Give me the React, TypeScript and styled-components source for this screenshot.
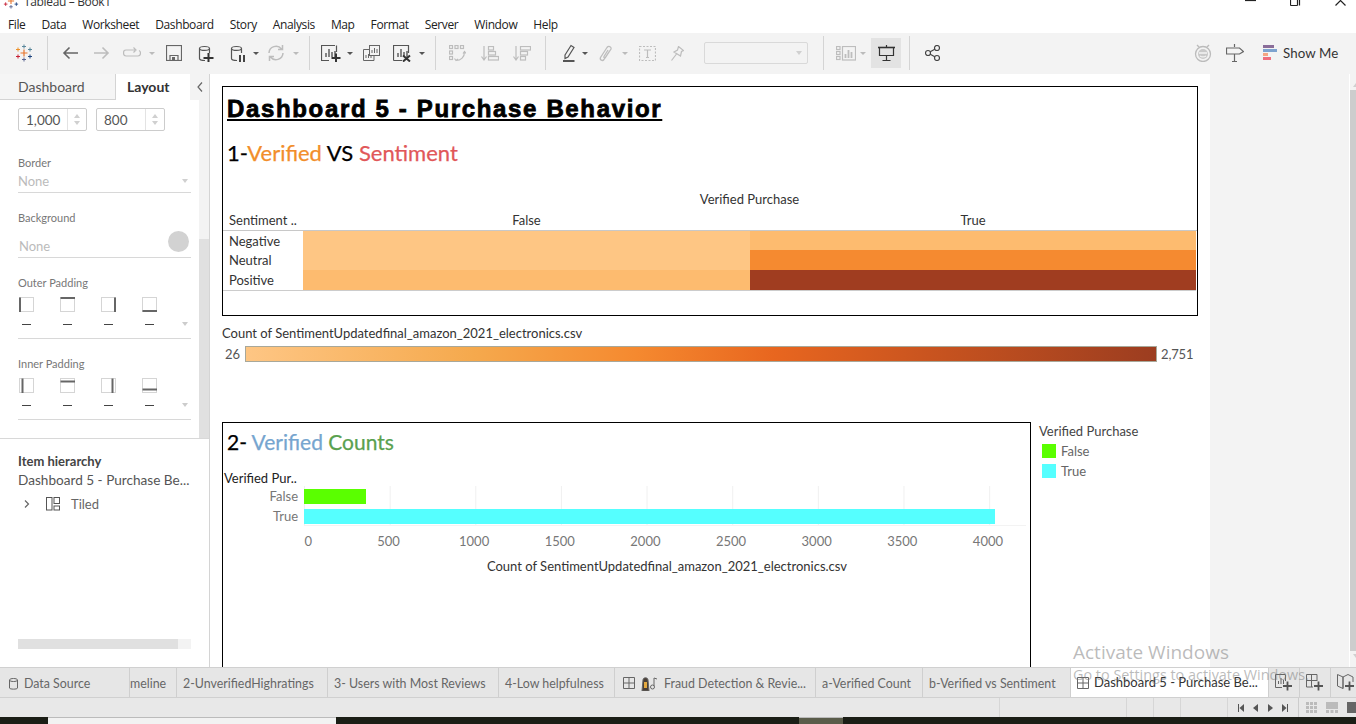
import React from "react";
import styled, { createGlobalStyle } from "styled-components";

const Global = createGlobalStyle`
  html, body { margin: 0; padding: 0; background: #fff; overflow: hidden; }
  * { box-sizing: border-box; }
`;
const TB = `"Lato", "Noto Sans", sans-serif`;
const UI = `"Open Sans", "Noto Sans", sans-serif`;

const Page = styled.div`
  width: 1356px; height: 724px; display: flex; flex-direction: column; position: relative; overflow: hidden;
  font-family: ${TB}; color: #333;
`;
const TitleBar = styled.div`
  height: 14px; flex: none; overflow: hidden; display: flex; align-items: flex-start; padding-left: 3px;
`;
const TitleLogo = styled.div`
  margin-top: -7px;
`;
const TitleText = styled.span`
  font: 12px ${UI}; color: #333; margin: -6px 0 0 5px; line-height: 16px; letter-spacing: -0.35px;
`;
const WinControls = styled.div`
  margin-left: auto; display: flex; gap: 34px; padding-right: 10px;
`;
const MenuBar = styled.div`
  height: 19px; flex: none; display: flex; gap: 16px; padding: 1px 0 0 8px; align-items: center;
  font: 12px ${UI}; color: #222; letter-spacing: -0.38px;
`;
const Toolbar = styled.div`
  height: 41px; flex: none; background: #f3f3f3; display: flex; align-items: center; padding-bottom: 1px;
`;
const Tool = styled.div<{ $ml?: number }>`
  display: flex; align-items: center; justify-content: center; flex: none; margin-left: ${p => p.$ml || 0}px;
`;
const Sep = styled.div<{ $ml: number }>`
  width: 1px; height: 34px; background: #d4d4d4; flex: none; margin-left: ${p => p.$ml}px;
`;
const Caret = styled.div<{ $ml: number; $light?: boolean }>`
  width: 0; height: 0; flex: none; margin-left: ${p => p.$ml}px;
  border-left: 3px solid transparent; border-right: 3px solid transparent;
  border-top: 3px solid ${p => (p.$light ? "#bbb" : "#555")}; 
`;
const Combo = styled.div`
  width: 104px; height: 22px; margin-left: 20px; flex: none; border: 1px solid #d9d9d9; border-radius: 2px;
  display: flex; align-items: center; justify-content: flex-end; padding-right: 5px;
`;
const ActiveTool = styled.div`
  width: 30px; height: 30px; margin-left: 5px; background: #e3e3e3; flex: none; display: flex; align-items: center; justify-content: center;
`;
const ShowMe = styled.div`
  display: flex; align-items: center; gap: 6px; margin-left: 19px; font: 13.3px ${TB}; color: #333; letter-spacing: 0.1px;
`;
const Main = styled.div`
  height: 593px; flex: none; display: flex; overflow: hidden;
`;
const Side = styled.aside`
  width: 210px; flex: none; border-right: 1px solid #d4d4d4; display: flex; flex-direction: column; background: #fff;
`;
const SideTabs = styled.div`
  height: 26px; flex: none; display: flex; background: #f3f3f3;
`;
const SideTab = styled.div<{ $active?: boolean; $w: number }>`
  width: ${p => p.$w}px; display: flex; align-items: center; font-size: 14px;
  padding-left: ${p => (p.$active ? 11 : 18)}px; padding-bottom: 1px;
  font-weight: ${p => (p.$active ? 700 : 400)}; color: ${p => (p.$active ? "#333" : "#555")};
  background: ${p => (p.$active ? "#fff" : "#f5f5f5")};
  border-right: ${p => (p.$active ? "none" : "1px solid #d4d4d4")};
  border-bottom: ${p => (p.$active ? "none" : "1px solid #d4d4d4")};
`;
const SideChevron = styled.div`
  flex: 1; display: flex; align-items: center; justify-content: center;
`;
const SideTop = styled.div`
  height: 339px; flex: none; display: flex; border-bottom: 1px solid #d8d8d8; overflow: hidden;
`;
const SideForm = styled.div`
  width: 199px; flex: none; padding: 8px 8px 0 18px; overflow: hidden; background: #fff;
`;
const VScroll = styled.div`
  width: 10px; flex: none; display: flex; flex-direction: column; background: #f3f3f3;
`;
const VThumb = styled.div`
  margin-top: 139px; flex: 1; background: #e0e0e0;
`;
const SizeRow = styled.div`
  display: flex; gap: 9px;
`;
const Spin = styled.div<{ $w: number }>`
  width: ${p => p.$w}px; height: 23px; border: 1px solid #ccc; border-radius: 2px; display: flex; align-items: center;
  justify-content: space-between; padding-left: 7px; font-size: 13.5px; color: #555;
`;
const SpinBtns = styled.div`
  width: 19px; height: 100%; border-left: 1px solid #e3e3e3; display: flex; flex-direction: column; align-items: center; justify-content: space-around; padding: 3px 0;
`;
const Arrow = styled.div<{ $up?: boolean }>`
  width: 0; height: 0; border-left: 3.5px solid transparent; border-right: 3.5px solid transparent;
  ${p => (p.$up ? "border-bottom: 4px solid #d0d0d0;" : "border-top: 4px solid #d0d0d0;")}
`;
const FieldLabel = styled.div<{ $mt: number }>`
  margin-top: ${p => p.$mt}px; font-size: 11px; line-height: 14px; color: #777;
`;
const FieldValue = styled.div<{ $h: number; $pl?: number; $pt?: number }>`
  height: ${p => p.$h}px; border-bottom: 1px solid #d8d8d8; display: flex; align-items: center; justify-content: space-between;
  font-size: 13px; color: #bbb; padding: ${p => p.$pt || 0}px 3px 0 ${p => p.$pl || 0}px; 
`;
const Swatch = styled.div`
  width: 21px; height: 21px; border-radius: 50%; background: #d2d2d2; margin: -10px -1px 0 0;
`;
const PadBlock = styled.div`
  height: 49px; border-bottom: 1px solid #d8d8d8; position: relative; padding-top: 7px;
`;
const PadIcons = styled.div`
  display: flex; gap: 25px; padding-left: 1px;
`;
const PadDashes = styled.div`
  display: flex; gap: 32px; padding: 11px 0 0 4px; 
`;
const Dash = styled.div`
  width: 9px; height: 1px; background: #444; 
`;
const PadCaret = styled.div`
  position: absolute; right: 3px; top: 32px; width: 0; height: 0;
  border-left: 3.5px solid transparent; border-right: 3.5px solid transparent; border-top: 4px solid #ccc;
`;
const Hier = styled.div`
  flex: 1; padding: 14px 18px 0; display: flex; flex-direction: column; min-height: 0;
`;
const HierTitle = styled.div`
  font-size: 13px; font-weight: 700; color: #444; line-height: 17px;
`;
const HierName = styled.div`
  font-size: 13.6px; color: #555; line-height: 19px; margin-top: 1px; white-space: nowrap;
`;
const HierItem = styled.div`
  display: flex; align-items: center; margin-top: 5px; padding-left: 6px; font-size: 13px; color: #666; height: 18px;
`;
const HierIcon = styled.div`
  margin-left: 16px; margin-right: 11px;
`;
const HScroll = styled.div`
  margin-top: auto; margin-bottom: 18px; height: 10px; background: #f3f3f3; flex: none;
`;
const HThumb = styled.div`
  width: 160px; height: 100%; background: #e0e0e0;
`;
const Canvas = styled.div`
  width: 1000px; flex: none; background: #fff; padding: 12px 12px 0; overflow: hidden;
`;
const Gutter = styled.div`
  flex: 1; background: #f3f3f3; display: flex; justify-content: flex-end;
`;
const PageScroll = styled.div`
  width: 7px; background: #f3f3f3; border-left: 1px solid #fff; display: flex; flex-direction: column;
`;
const ScrollArrow = styled.div<{ $up?: boolean }>`
  height: 16px; flex: none; display: flex; align-items: ${p => (p.$up ? "flex-end" : "flex-start")}; padding-left: 3px;
  padding-bottom: ${p => (p.$up ? 3 : 0)}px; padding-top: ${p => (p.$up ? 0 : 3)}px;
`;
const ScrollThumb = styled.div`
  flex: 1; background: #cdcdcd;
`;
const Frame = styled.section`
  border: 1px solid #000; background: #fff;
`;
const Box1 = styled(Frame)`
  width: 976px; height: 230px;
`;
const BigTitle = styled.h1`
  margin: 7px 0 0 4px; font: 900 24px/30px "Liberation Sans", sans-serif; color: #000; text-decoration: underline;
  text-decoration-thickness: 2px; text-underline-offset: 2px; letter-spacing: 1.65px; -webkit-text-stroke: 0.8px #000;
`;
const Heading = styled.h2<{ $mt: number; $size: number }>`
  margin: ${p => p.$mt}px 0 0 4px; font: 400 ${p => p.$size}px/26px ${TB}; color: #000; -webkit-text-stroke: 0.25px currentColor;
`;
const Tint = styled.span<{ $c: string }>`
  color: ${p => p.$c};
`;
const ColTitle = styled.div`
  margin-top: 25px; margin-left: 80px; width: 893px; text-align: center; font-size: 13px; line-height: 16px; color: #333;
`;
const HeatHead = styled.div`
  display: grid; grid-template-columns: 80px 447px 446px; height: 24px; align-items: center; font-size: 13px; color: #333; padding-top: 3px;
  border-bottom: 1px solid #c8c8c8;
`;
const HeadCell = styled.div<{ $c?: boolean }>`
  text-align: ${p => (p.$c ? "center" : "left")}; padding-left: ${p => (p.$c ? 0 : 6)}px; white-space: nowrap;
`;
const HeatGrid = styled.div`
  display: grid; grid-template-columns: 80px 447px 446px; grid-template-rows: 19px 20px 20px; width: 973px; border-bottom: 1px solid #ccc;
`;
const RowHead = styled.div`
  padding-left: 6px; font-size: 13px; line-height: 21px; color: #333;
`;
const HeatCell = styled.div<{ $c: string }>`
  background: ${p => p.$c};
`;
const LegendTitle = styled.div`
  margin-top: 9px; font-size: 13px; line-height: 16px; color: #333; 
`;
const GradRow = styled.div`
  display: flex; align-items: center; height: 16px; margin-top: 5px; font-size: 13px; color: #555;
`;
const GradMin = styled.div`
  width: 23px; padding-right: 5px; text-align: right; 
`;
const GradBar = styled.div`
  width: 912px; height: 16px; flex: none; border: 1px solid #a8a89a; 
  background: linear-gradient(to right, #fec684 0%, #f5a94d 25%, #f5892f 43%, #e8661f 58%, #c9541f 75%, #9c3d20 100%);
`;
const GradMax = styled.div`
  margin-left: 4px; letter-spacing: -0.15px;
`;
const Lower = styled.div`
  display: flex; margin-top: 60px; gap: 8px;
`;
const Box2 = styled(Frame)`
  width: 809px; height: 300px; flex: none;
`;
const ChartHeader = styled.div`
  margin: 15px 0 0 1px; font-size: 13px; line-height: 16px; color: #222;
`;
const ChartBody = styled.div`
  display: flex;
`;
const AxisLabels = styled.div`
  width: 75px; flex: none; text-align: right; padding: 3px 0 0; font-size: 13px; color: #777;
  display: flex; flex-direction: column; gap: 5px; line-height: 15px;
`;
const Plot = styled.div`
  margin-left: 6px; width: 722px; height: 40px; padding-top: 3px; display: flex; flex-direction: column; gap: 5px;
  background-image: linear-gradient(to right, #f0f0f0 1px, transparent 1px);
  background-size: 85.65px 100%; background-position: 0 0; border-bottom: 1px solid #f3f3f3;
`;
const Bar = styled.div<{ $c: string }>`
  height: 15px; background: ${p => p.$c};
`;
const Ticks = styled.div`
  display: flex; margin: 7px 0 0 37px; font-size: 13px; line-height: 16px; color: #777;
`;
const TickCell = styled.div<{ $first?: boolean }>`
  width: 85.65px; flex: none; text-align: center; padding-left: ${p => (p.$first ? 11 : 0)}px;
`;
const XTitle = styled.div`
  margin-top: 9px; width: 888px; text-align: center; font-size: 13px; line-height: 16px; color: #333;
`;
const SideLegend = styled.div`
  padding-top: 1px;
`;
const SideLegendTitle = styled.div`
  font-size: 13px; line-height: 16px; color: #444;
`;
const LegendRow = styled.div`
  display: flex; align-items: center; gap: 5px; margin: 3px 0 0 3px; height: 17px; font-size: 13px; color: #666;
`;
const LegendSwatch = styled.div<{ $c: string }>`
  width: 14px; height: 14px; background: ${p => p.$c};
`;
const TabBar = styled.div`
  height: 31px; flex: none; background: #e6e6e6; border-top: 1px solid #d0d0d0; border-bottom: 1px solid #d0d0d0; display: flex;
`;
const SheetTab = styled.div<{ $w: number; $active?: boolean; $left?: number; $gap?: number }>`
  width: ${p => p.$w}px; flex: none; display: flex; align-items: center; gap: ${p => p.$gap ?? 5}px;
  padding: 1px 0 0 ${p => p.$left ?? 6}px; font-size: 12.4px; color: ${p => (p.$active ? "#333" : "#666")};
  background: ${p => (p.$active ? "#fff" : "transparent")}; border-right: 1px solid #cfcfcf; white-space: nowrap; overflow: hidden;
`;
const ActiveLabel = styled.span`
  font-size: 13px; margin-top: -3px;
`;
const AddTab = styled.div`
  width: 31px; flex: none; display: flex; align-items: center; justify-content: center; border-right: 1px solid #cfcfcf;
`;
const StatusBar = styled.div`
  height: 19px; flex: none; background: #e8e8e8; display: flex; align-items: stretch;
`;
const StatusCell = styled.div<{ $w: number }>`
  width: ${p => p.$w}px; flex: none; border-right: 1px solid #d6d6d6;
`;
const StatusNav = styled.div`
  width: 71px; flex: none; display: flex; align-items: center; justify-content: space-around; padding: 0 5px; border-right: 1px solid #ccc;
`;
const ViewBtns = styled.div`
  flex: 1; display: flex; align-items: center; gap: 9px; padding-left: 7px; overflow: hidden;
`;
const Taskbar = styled.div`
  height: 7px; flex: none; display: flex; background: #1b1e16;
`;
const TaskGap = styled.div<{ $w: number }>`
  width: ${p => p.$w}px; flex: none;
`;
const TaskItem = styled.div<{ $w: number; $c: string }>`
  width: ${p => p.$w}px; flex: none; background: ${p => p.$c}; border-top: 1px solid #bbb;
`;
const Watermark = styled.div`
  position: absolute; left: 1073px; top: 641px; color: rgba(120,120,120,0.5); font: 19px/22px ${UI}; pointer-events: none;
`;
const WatermarkSub = styled.div`
  font-size: 14.4px; line-height: 20px; margin-top: 2px; white-space: nowrap; 
`;

const S = ({ w, h, children, c = "#555", sw = 1.2 }: { w: number; h: number; children: React.ReactNode; c?: string; sw?: number }) => (
  <svg width={w} height={h} viewBox={`0 0 ${w} ${h}`} fill="none" stroke={c} strokeWidth={sw} style={{ display: "block", flex: "none" }}>
    {children}
  </svg>
);

const Cross = ({ x, y, r, c, sw = 1.2 }: { x: number; y: number; r: number; c: string; sw?: number }) => (
  <path d={`M${x - r} ${y}H${x + r}M${x} ${y - r}V${y + r}`} stroke={c} strokeWidth={sw} />
);

const TableauLogo = ({ size = 18 }: { size?: number }) => (
  <svg width={size} height={size} viewBox="0 0 18 18" fill="none" style={{ display: "block" }}>
    <Cross x={9} y={9} r={3.5} c="#e8762d" sw={1.2} />
    <Cross x={9} y={2.5} r={2} c="#5b879b" sw={1} />
    <Cross x={9} y={15.5} r={2} c="#5b6591" sw={1} />
    <Cross x={3} y={5.5} r={2} c="#eb912b" sw={1} />
    <Cross x={15} y={5.5} r={2} c="#59879b" sw={1} />
    <Cross x={3} y={12.5} r={2} c="#c72035" sw={1} />
    <Cross x={15} y={12.5} r={2} c="#1f447e" sw={1} />
  </svg>
);

const Db = ({ c = "#555" }: { c?: string }) => (
  <path d="M1.5 3.5C1.5 .8 11.5 .8 11.5 3.5M1.5 3.5C1.5 6 11.5 6 11.5 3.5V8M1.5 3.5V13.5C1.5 15 4 15.5 7 15.5" stroke={c} />
);

const Bars = ({ c = "#555" }: { c?: string }) => (
  <path d="M5 12V8M8 12V4M11 12V7M14 12V6" stroke={c} strokeWidth={1.4} />
);

const PadIcon = ({ side, inner }: { side: "l" | "t" | "r" | "b"; inner?: boolean }) => {
  const o = inner ? 3.5 : 1;
  const line =
    side === "l" ? `M${o} 0.5V15` : side === "r" ? `M${15 - o} 0.5V15` : side === "t" ? `M0.5 ${o}H15` : `M0.5 ${15 - o}H15`;
  return (
    <S w={16} h={16}>
      <rect x={0.5} y={0.5} width={14} height={14} stroke="#aaa" strokeDasharray="1 1" strokeWidth={1} />
      <path d={line} stroke="#666" strokeWidth={2} />
    </S>
  );
};

const PadSection = ({ inner }: { inner?: boolean }) => (
  <PadBlock>
    <PadIcons>
      <PadIcon side="l" inner={inner} />
      <PadIcon side="t" inner={inner} />
      <PadIcon side="r" inner={inner} />
      <PadIcon side="b" inner={inner} />
    </PadIcons>
    <PadDashes>
      <Dash /><Dash /><Dash /><Dash />
    </PadDashes>
    <PadCaret />
  </PadBlock>
);

const G = "#bdbdbd";

const ticks = [0, 500, 1000, 1500, 2000, 2500, 3000, 3500, 4000];
const MAX_PX = 85.65 / 500;

export default function App() {
  return (
    <Page>
      <Global />
      <TitleBar>
        <TitleLogo><TableauLogo size={16} /></TitleLogo>
        <TitleText>Tableau – Book1</TitleText>
        <WinControls>
          <S w={11} h={6}><path d="M0 .5H11" stroke="#222" /></S>
          <S w={11} h={6}><path d="M.5 5.5V0M9.5 5.5V0M.5 5.5H7.5M7.5 5.5V0" stroke="#222" /></S>
          <S w={11} h={6}><path d="M.5 5.5L5.5 .5L10.5 5.5" stroke="#222" /></S>
        </WinControls>
      </TitleBar>
      <MenuBar>
        {["File", "Data", "Worksheet", "Dashboard", "Story", "Analysis", "Map", "Format", "Server", "Window", "Help"].map(m => (
          <span key={m}>{m}</span>
        ))}
      </MenuBar>
      <Toolbar>
        <Tool $ml={15}><TableauLogo /></Tool>
        <Sep $ml={14} />
        <Tool $ml={14}><S w={16} h={14} c="#666" sw={1.6}><path d="M16 7H2M7.5 1.5L2 7L7.5 12.5" /></S></Tool>
        <Tool $ml={16}><S w={16} h={14} c={G} sw={1.6}><path d="M0 7H14M8.5 1.5L14 7L8.5 12.5" /></S></Tool>
        <Tool $ml={13}><S w={18} h={12} c={G}><path d="M12 3H3C1 3 .5 4.5 .5 6S1 9 3 9H15C17 9 17.5 7.5 17.5 6S17 4 16 3.5M10.5 .5L13 3L10.5 5.5" /></S></Tool>
        <Caret $ml={8} $light />
        <Tool $ml={11}><S w={16} h={16} c="#666"><rect x={.5} y={.5} width={15} height={15} /><path d="M4 15.5V10.5H12V15.5" /><rect x={6} y={12} width={3} height={3.5} fill="#666" stroke="none" /></S></Tool>
        <Tool $ml={16}><S w={16} h={17}><Db /><Cross x={10.5} y={13} r={5} c="#333" sw={2} /></S></Tool>
        <Tool $ml={16}><S w={16} h={17}><Db /><path d="M10 10V17M14 10V17" stroke="#444" strokeWidth={2} /></S></Tool>
        <Caret $ml={7} />
        <Tool $ml={8}><S w={18} h={16} c={G} sw={1.5}><path d="M2 8A7 7 0 0 1 14.5 4M16 8A7 7 0 0 1 3.5 12M11 4.5H15.5V0M7 11.5H2.5V16" /></S></Tool>
        <Caret $ml={8} $light />
        <Sep $ml={10} />
        <Tool $ml={11}><S w={20} h={17}><path d="M14 .5H.5V15.5H8M15.5 .5V7" /><Bars /><Cross x={15} y={13} r={4.5} c="#333" sw={2} /></S></Tool>
        <Caret $ml={6} />
        <Tool $ml={10}><S w={17} h={16} c="#666" sw={1}><rect x={6.5} y={.5} width={10} height={10} /><path d="M9 8V5M11.5 8V3M14 8V4" /><path d="M6 4.5H.5V15.5H11V11M3 13V10M5.5 13V9M8 13V11" /></S></Tool>
        <Tool $ml={13}><S w={18} h={17}><path d="M.5 15.5V.5H15.5V8M.5 15.5H9" /><Bars /><path d="M10 10.5L17 16.5M17 10.5L10 16.5" stroke="#333" strokeWidth={2} /></S></Tool>
        <Caret $ml={8} />
        <Sep $ml={10} />
        <Tool $ml={13}><S w={17} h={17} c={G}><rect x={.5} y={.5} width={3} height={3} /><rect x={6} y={.5} width={3} height={3} /><rect x={11.5} y={.5} width={3} height={3} /><rect x={.5} y={6} width={3} height={3} /><rect x={.5} y={11.5} width={3} height={3} /><path d="M15.5 7C15.5 12 12 15.5 7 15.5M5.5 13.5L7 15.5L9 14M14 8.5L15.5 6.5L17 8.5" /></S></Tool>
        <Tool $ml={15}><S w={18} h={15} c={G}><path d="M3 0V13M.5 10.5L3 14L5.5 10.5" /><rect x={7.5} y={.5} width={5} height={3.5} /><rect x={7.5} y={5.5} width={7} height={3.5} /><rect x={7.5} y={10.5} width={10} height={3.5} /></S></Tool>
        <Tool $ml={14}><S w={18} h={15} c={G}><path d="M3 0V13M.5 10.5L3 14L5.5 10.5" /><rect x={7.5} y={.5} width={10} height={3.5} /><rect x={7.5} y={5.5} width={7} height={3.5} /><rect x={7.5} y={10.5} width={5} height={3.5} /></S></Tool>
        <Sep $ml={14} />
        <Tool $ml={16}><S w={13} h={18}><path d="M3 11L9 1.5L12 3.5L6 13L3 14.5Z" /><path d="M1 17H12.5" stroke="#555" strokeWidth={2} /></S></Tool>
        <Caret $ml={7} />
        <Tool $ml={11}><S w={13} h={17} c={G} sw={1.3}><path d="M10.5 6L5 14.5C3.5 16.5 .5 15 1.5 12.5L8 2.5C9.5 .5 12.5 1.5 12 4L6.5 12.5C6 13.5 4.5 13 5 11.5L9 5" /></S></Tool>
        <Caret $ml={10} $light />
        <Tool $ml={11}><S w={17} h={15} c={G}><rect x={.5} y={.5} width={16} height={14} strokeDasharray="2 1.5" /><path d="M5 4H12M8.5 4V11.5M7 11.5H10" /></S></Tool>
        <Tool $ml={15}><S w={13} h={15} c={G}><path d="M7.5 .5L12.5 4.5L10.5 5.5L9.5 10L3 6L6.5 4ZM5.5 8L.5 14.5" /></S></Tool>
        <Combo><Arrow /></Combo>
        <Sep $ml={15} />
        <Tool $ml={12}><S w={20} h={15} c={G}><rect x={.5} y={.5} width={3.5} height={3} /><rect x={.5} y={5.5} width={3.5} height={3} /><rect x={.5} y={10.5} width={3.5} height={3} /><rect x={6.5} y={.5} width={13} height={13.5} /><path d="M9.5 12V8M12.5 12V4M15.5 12V6" strokeWidth={1.8} /></S></Tool>
        <Caret $ml={4} $light />
        <ActiveTool><S w={17} h={16} c="#333"><path d="M0 2.5H17" strokeWidth={1.6} /><path d="M1.5 2.5V10.5H15.5V2.5M8.5 0V2.5M8.5 10.5V15M4.5 15.5H12.5" /></S></ActiveTool>
        <Sep $ml={8} />
        <Tool $ml={15}><S w={15} h={16} c="#444"><circle cx={3} cy={8} r={2.5} /><circle cx={12} cy={3} r={2.5} /><circle cx={12} cy={13} r={2.5} /><path d="M5.2 6.8L9.8 4.2M5.2 9.2L9.8 11.8" /></S></Tool>
        <Tool $ml={254}><S w={18} h={18} c="#bbb" sw={1.3}><circle cx={9} cy={10} r={7.5} /><circle cx={9} cy={10} r={5} fill="#c9c9c9" stroke="none" /><path d="M3 1L5 3M15 1L13 3" /><path d="M5 9H13M6 12C7.5 13 10.5 13 12 12" stroke="#f3f3f3" /></S></Tool>
        <Tool $ml={14}><S w={18} h={18} c="#666" sw={1.2}><path d="M8.5 0V3M.5 4H13.5L17.5 7.5L13.5 10H.5ZM8.5 10V17M6 17.5H11" /></S></Tool>
        <ShowMe>
          <svg width={14} height={16} viewBox="0 0 14 16" style={{ display: "block" }}>
            <rect x={0} y={0} width={11} height={3} fill="#8a6d99" />
            <rect x={0} y={4} width={14} height={3} fill="#7ea3cf" />
            <rect x={0} y={8} width={5} height={3} fill="#f4a582" />
            <rect x={0} y={12} width={8} height={3} fill="#ef6e7d" />
          </svg>
          <span>Show Me</span>
        </ShowMe>
      </Toolbar>
      <Main>
        <Side>
          <SideTabs>
            <SideTab $w={116}>Dashboard</SideTab>
            <SideTab $w={74} $active>Layout</SideTab>
            <SideChevron><S w={6} h={10} c="#666"><path d="M5 .5L1 5L5 9.5" /></S></SideChevron>
          </SideTabs>
          <SideTop>
            <SideForm>
              <SizeRow>
                <Spin $w={69}>1,000<SpinBtns><Arrow $up /><Arrow /></SpinBtns></Spin>
                <Spin $w={69}>800<SpinBtns><Arrow $up /><Arrow /></SpinBtns></Spin>
              </SizeRow>
              <FieldLabel $mt={25}>Border</FieldLabel>
              <FieldValue $h={23}>None<Arrow /></FieldValue>
              <FieldLabel $mt={18}>Background</FieldLabel>
              <FieldValue $h={33} $pl={1} $pt={10}>None<Swatch /></FieldValue>
              <FieldLabel $mt={18}>Outer Padding</FieldLabel>
              <PadSection />
              <FieldLabel $mt={18}>Inner Padding</FieldLabel>
              <PadSection inner />
            </SideForm>
            <VScroll><VThumb /></VScroll>
          </SideTop>
          <Hier>
            <HierTitle>Item hierarchy</HierTitle>
            <HierName>Dashboard 5 - Purchase Be...</HierName>
            <HierItem>
              <S w={6} h={8} c="#666"><path d="M1 .5L4.5 4L1 7.5" /></S>
              <HierIcon><S w={14} h={14} c="#555" sw={1}><rect x={.5} y={.5} width={5.5} height={12.5} /><rect x={8} y={.5} width={5.5} height={6} /><rect x={8} y={9} width={5.5} height={4} /></S></HierIcon>
              <span>Tiled</span>
            </HierItem>
            <HScroll><HThumb /></HScroll>
          </Hier>
        </Side>
        <Canvas>
          <Box1>
            <BigTitle>Dashboard 5 - Purchase Behavior</BigTitle>
            <Heading $mt={16} $size={22}>1-<Tint $c="#f28e2b">Verified</Tint> VS <Tint $c="#e15759">Sentiment</Tint></Heading>
            <ColTitle>Verified Purchase</ColTitle>
            <HeatHead>
              <HeadCell>Sentiment ..</HeadCell>
              <HeadCell $c>False</HeadCell>
              <HeadCell $c>True</HeadCell>
            </HeatHead>
            <HeatGrid>
              <RowHead>Negative</RowHead><HeatCell $c="#fec684" /><HeatCell $c="#fdbb6f" />
              <RowHead>Neutral</RowHead><HeatCell $c="#fec684" /><HeatCell $c="#f58a30" />
              <RowHead>Positive</RowHead><HeatCell $c="#fdbb6f" /><HeatCell $c="#a03d20" />
            </HeatGrid>
          </Box1>
          <LegendTitle>Count of SentimentUpdatedfinal_amazon_2021_electronics.csv</LegendTitle>
          <GradRow>
            <GradMin>26</GradMin>
            <GradBar />
            <GradMax>2,751</GradMax>
          </GradRow>
          <Lower>
            <Box2>
              <Heading $mt={6} $size={21}>2- <Tint $c="#76a5cf">Verified</Tint> <Tint $c="#59a14f">Counts</Tint></Heading>
              <ChartHeader>Verified Pur..</ChartHeader>
              <ChartBody>
                <AxisLabels><span>False</span><span>True</span></AxisLabels>
                <Plot>
                  <Bar $c="#5aff00" style={{ width: 362 * MAX_PX }} />
                  <Bar $c="#55ffff" style={{ width: 4033 * MAX_PX }} />
                </Plot>
              </ChartBody>
              <Ticks>
                {ticks.map((t, i) => <TickCell key={t} $first={i === 0}>{t}</TickCell>)}
              </Ticks>
              <XTitle>Count of SentimentUpdatedfinal_amazon_2021_electronics.csv</XTitle>
            </Box2>
            <SideLegend>
              <SideLegendTitle>Verified Purchase</SideLegendTitle>
              <LegendRow><LegendSwatch $c="#5aff00" />False</LegendRow>
              <LegendRow><LegendSwatch $c="#55ffff" />True</LegendRow>
            </SideLegend>
          </Lower>
        </Canvas>
        <Gutter>
          <PageScroll>
            <ScrollArrow $up><Arrow $up /></ScrollArrow>
            <ScrollThumb />
            <ScrollArrow><Arrow /></ScrollArrow>
          </PageScroll>
        </Gutter>
      </Main>
      <TabBar>
        <SheetTab $w={130} $left={9} $gap={6}>
          <S w={9} h={13} c="#666" sw={1}><path d="M.5 3C.5 1 8.5 1 8.5 3M.5 3C.5 5 8.5 5 8.5 3V11C8.5 12.5 .5 12.5 .5 11Z" /></S>
          <span>Data Source</span>
        </SheetTab>
        <SheetTab $w={47} $left={0}>meline</SheetTab>
        <SheetTab $w={151}>2-UnverifiedHighratings</SheetTab>
        <SheetTab $w={171}>3- Users with Most Reviews</SheetTab>
        <SheetTab $w={116}>4-Low helpfulness</SheetTab>
        <SheetTab $w={201} $left={8} $gap={6}>
          <S w={12} h={12} c="#666" sw={1}><path d="M.5 .5H11.5V11.5H.5ZM6 .5V11.5M.5 6H11.5" /></S>
          <S w={17} h={15} c="#666" sw={1}><path d="M1 15L2 4C2 1 7 1 7 4L8 15Z" fill="#4a4038" /><rect x={3} y={6} width={3} height={6} fill="#e4a93f" stroke="none" /><path d="M13 2V10M13 2L16 3" /><circle cx={11.5} cy={11} r={2} /></S>
          <span>Fraud Detection &amp; Revie...</span>
        </SheetTab>
        <SheetTab $w={107}>a-Verified Count</SheetTab>
        <SheetTab $w={148}>b-Verified vs Sentiment</SheetTab>
        <SheetTab $w={198} $active>
          <S w={12} h={12} c="#666" sw={1}><path d="M.5 .5H11.5V11.5H.5ZM6 .5V11.5M.5 6H11.5" /></S>
          <ActiveLabel>Dashboard 5 - Purchase Be...</ActiveLabel>
        </SheetTab>
        <AddTab><S w={18} h={17} c="#666" sw={1}><path d="M10 .5H.5V13.5H7M10.5 .5V7M3.5 10V7M6 10V4M8.5 10V6" /><Cross x={12.5} y={12} r={4.5} c="#555" sw={1.8} /></S></AddTab>
        <AddTab><S w={18} h={17} c="#666" sw={1}><path d="M11 7V.5H.5V13H7M5.5 .5V13M.5 6.5H11" /><Cross x={12.5} y={12} r={4.5} c="#555" sw={1.8} /></S></AddTab>
        <AddTab><S w={18} h={17} c="#666" sw={1}><path d="M6 3L.5 .5V12L6 14.5ZM6 3L11 .5L16 3V8M6 14.5V3" /><Cross x={12.5} y={12} r={4.5} c="#555" sw={1.8} /></S></AddTab>
      </TabBar>
      <StatusBar>
        <StatusCell $w={1000} />
        <StatusCell $w={127} />
        <StatusCell $w={27} />
        <StatusCell $w={27} />
        <StatusCell $w={47} />
        <StatusNav>
          <S w={6} h={8} c="#555" sw={1}><path d="M.5 0V8" /><path d="M6 0V8L1.5 4Z" fill="#555" stroke="none" /></S>
          <S w={5} h={8}><path d="M5 0V8L0 4Z" fill="#555" stroke="none" /></S>
          <S w={5} h={8}><path d="M0 0V8L5 4Z" fill="#555" stroke="none" /></S>
          <S w={6} h={8} c="#555" sw={1}><path d="M5.5 0V8" /><path d="M0 0V8L4.5 4Z" fill="#555" stroke="none" /></S>
        </StatusNav>
        <ViewBtns>
          <svg width={11} height={11} viewBox="0 0 11 11" style={{ display: "block", flex: "none" }}>
            {[0, 4, 8].flatMap(x => [0, 4, 8].map(y => <rect key={`${x}-${y}`} x={x} y={y} width={3} height={3} fill="#bbb" />))}
          </svg>
          <svg width={12} height={11} viewBox="0 0 12 11" style={{ display: "block", flex: "none" }}>
            <rect x={0} y={0} width={12} height={7} fill="#bbb" />
            <rect x={0} y={8} width={3} height={3} fill="#bbb" /><rect x={4.5} y={8} width={3} height={3} fill="#bbb" /><rect x={9} y={8} width={3} height={3} fill="#bbb" />
          </svg>
          <svg width={12} height={11} viewBox="0 0 12 11" style={{ display: "block", flex: "none" }}>
            <rect x={0} y={0} width={12} height={11} fill="#666" />
          </svg>
        </ViewBtns>
      </StatusBar>
      <Taskbar>
        <TaskGap $w={48} />
        <TaskItem $w={288} $c="#f2f2f2" />
        <TaskGap $w={463} />
        <TaskItem $w={44} $c="#5a5c4a" />
      </Taskbar>
      <Watermark>
        Activate Windows
        <WatermarkSub>Go to Settings to activate Windows.</WatermarkSub>
      </Watermark>
    </Page>
  );
}
